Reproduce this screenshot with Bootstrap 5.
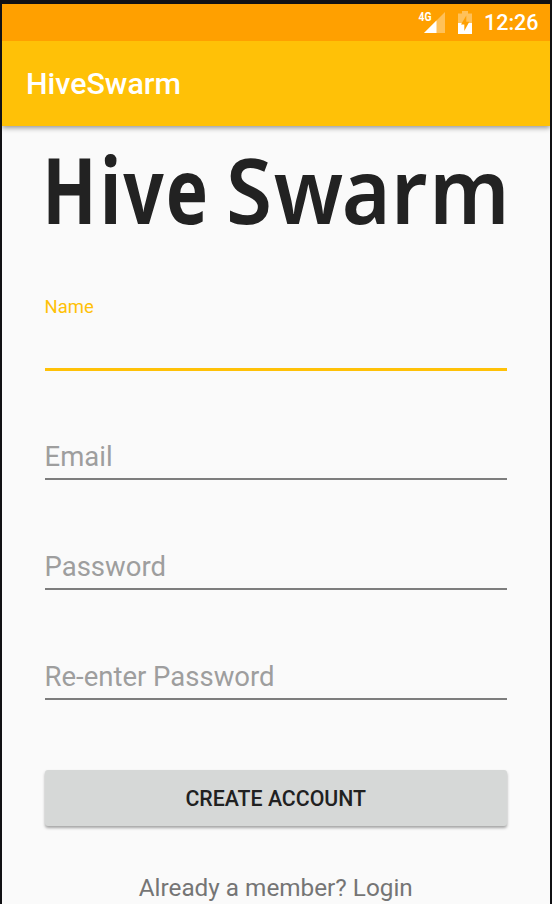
<!DOCTYPE html>
<html lang="en">
<head>
<meta charset="utf-8">
<meta name="viewport" content="width=device-width, initial-scale=1">
<title>HiveSwarm</title>
<link href="https://cdn.jsdelivr.net/npm/bootstrap@5.3.0/dist/css/bootstrap.min.css" rel="stylesheet">
<style>
body { font-family: Roboto, sans-serif; background: #111114; }
.phone { height: 904px; padding: 4px 2px 0; }
.screen { background: #fafafa; }
.status-bar { height: 37px; background: #ffa000; padding-right: 12px; z-index: 2; }
.clock { font-size: 21.5px; line-height: 38px; font-weight: 500; margin-left: 10px; width: 54px; white-space: nowrap; }
.battery { margin-left: 10px; }
.app-bar { height: 85px; background: #ffc107; padding: 2px 24px 0; box-shadow: 0 2px 5px rgba(0,0,0,.4); }
.app-title { font-size: 30.4px; line-height: 1; font-weight: 500; }
.form-area { padding: 0 43px 0 42.5px; }
.wordmark { height: 100px; margin-top: 14px; }
.wordmark text { font-family: "Noto Sans", sans-serif; font-weight: 700; font-size: 91px; fill: #222; }
.wordmark .second-word { font-weight: 600; }
.name-label { font-size: 18.5px; line-height: 22px; color: #ffc107; margin-top: 56px; }
.field { font-size: 27.5px; line-height: 32px; background: transparent !important; border: 0; padding: 0; box-shadow: none !important; }
.field::placeholder { color: #9e9e9e; opacity: 1; }
.field-name { height: 53px; border-bottom: 3px solid #ffc107; margin-bottom: -1px; }
.field-line { height: 46px; padding: 0; border-bottom: 2px solid #7d7d7d; margin-top: 64px; }
.create { height: 56px; margin-top: 70px; background: #d6d8d7 !important; color: #212121 !important; border-radius: 3px; font-size: 21.3px; line-height: 57px; font-weight: 500; box-shadow: 0 2px 3px rgba(0,0,0,.35); }
.login-link { font-size: 24.3px; line-height: 30px; color: #757575; margin-top: 47px; }
</style>
</head>
<body>
<div class="phone overflow-hidden">
  <main class="screen h-100 overflow-hidden">
    <div class="status-bar d-flex align-items-center justify-content-end text-white position-relative">
      <svg width="28" height="25" viewBox="418 10 28 25" aria-label="4G signal">
        <path d="M445 12V33H424Z" fill="#fff" fill-opacity=".35"/>
        <path d="M436.500 20.500V33H424Z" fill="#fff"/>
        <text x="418.500" y="20.500" font-size="12" font-weight="700" textLength="13" lengthAdjust="spacingAndGlyphs" fill="#fff">4G</text>
      </svg>
      <svg class="battery" width="18" height="25" viewBox="456 10 18 25" aria-label="Battery charging">
        <path d="M458 13.500H462V11H468V13.500H472V23H458Z" fill="#fff" fill-opacity=".35"/>
        <path d="M458 23H472V34H458Z" fill="#fff"/>
        <path d="M466.300 15.500 461 24.500H464.300V31L469.300 21.800H466.300Z" fill="#ffa000"/>
      </svg>
      <span class="clock">12:26</span>
    </div>
    <header class="app-bar d-flex align-items-center position-relative">
      <h1 class="app-title text-white mb-0">HiveSwarm</h1>
    </header>
    <form class="form-area">
      <svg class="wordmark d-block w-100" viewBox="44.500 140 462.500 100" preserveAspectRatio="none" overflow="visible" role="img" aria-label="Hive Swarm">
        <text transform="scale(.78 1)" x="53.500 127.500 157.500 212" y="224.500">Hive</text>
        <text class="second-word" transform="scale(.92 1)" x="245 297 371 424.500 466" y="224.500">Swarm</text>
      </svg>
      <label class="name-label d-block" for="name">Name</label>
      <input class="form-control rounded-0 field field-name" id="name" type="text">
      <input class="form-control rounded-0 field field-line" type="email" placeholder="Email" aria-label="Email">
      <input class="form-control rounded-0 field field-line" type="password" placeholder="Password" aria-label="Password">
      <input class="form-control rounded-0 field field-line" type="password" placeholder="Re-enter Password" aria-label="Re-enter Password">
      <button class="btn create w-100 border-0 p-0 text-uppercase" type="button">Create Account</button>
      <div class="login-link text-center">Already a member? Login</div>
    </form>
  </main>
</div>
<script src="https://cdn.jsdelivr.net/npm/bootstrap@5.3.0/dist/js/bootstrap.bundle.min.js"></script>
</body>
</html>
